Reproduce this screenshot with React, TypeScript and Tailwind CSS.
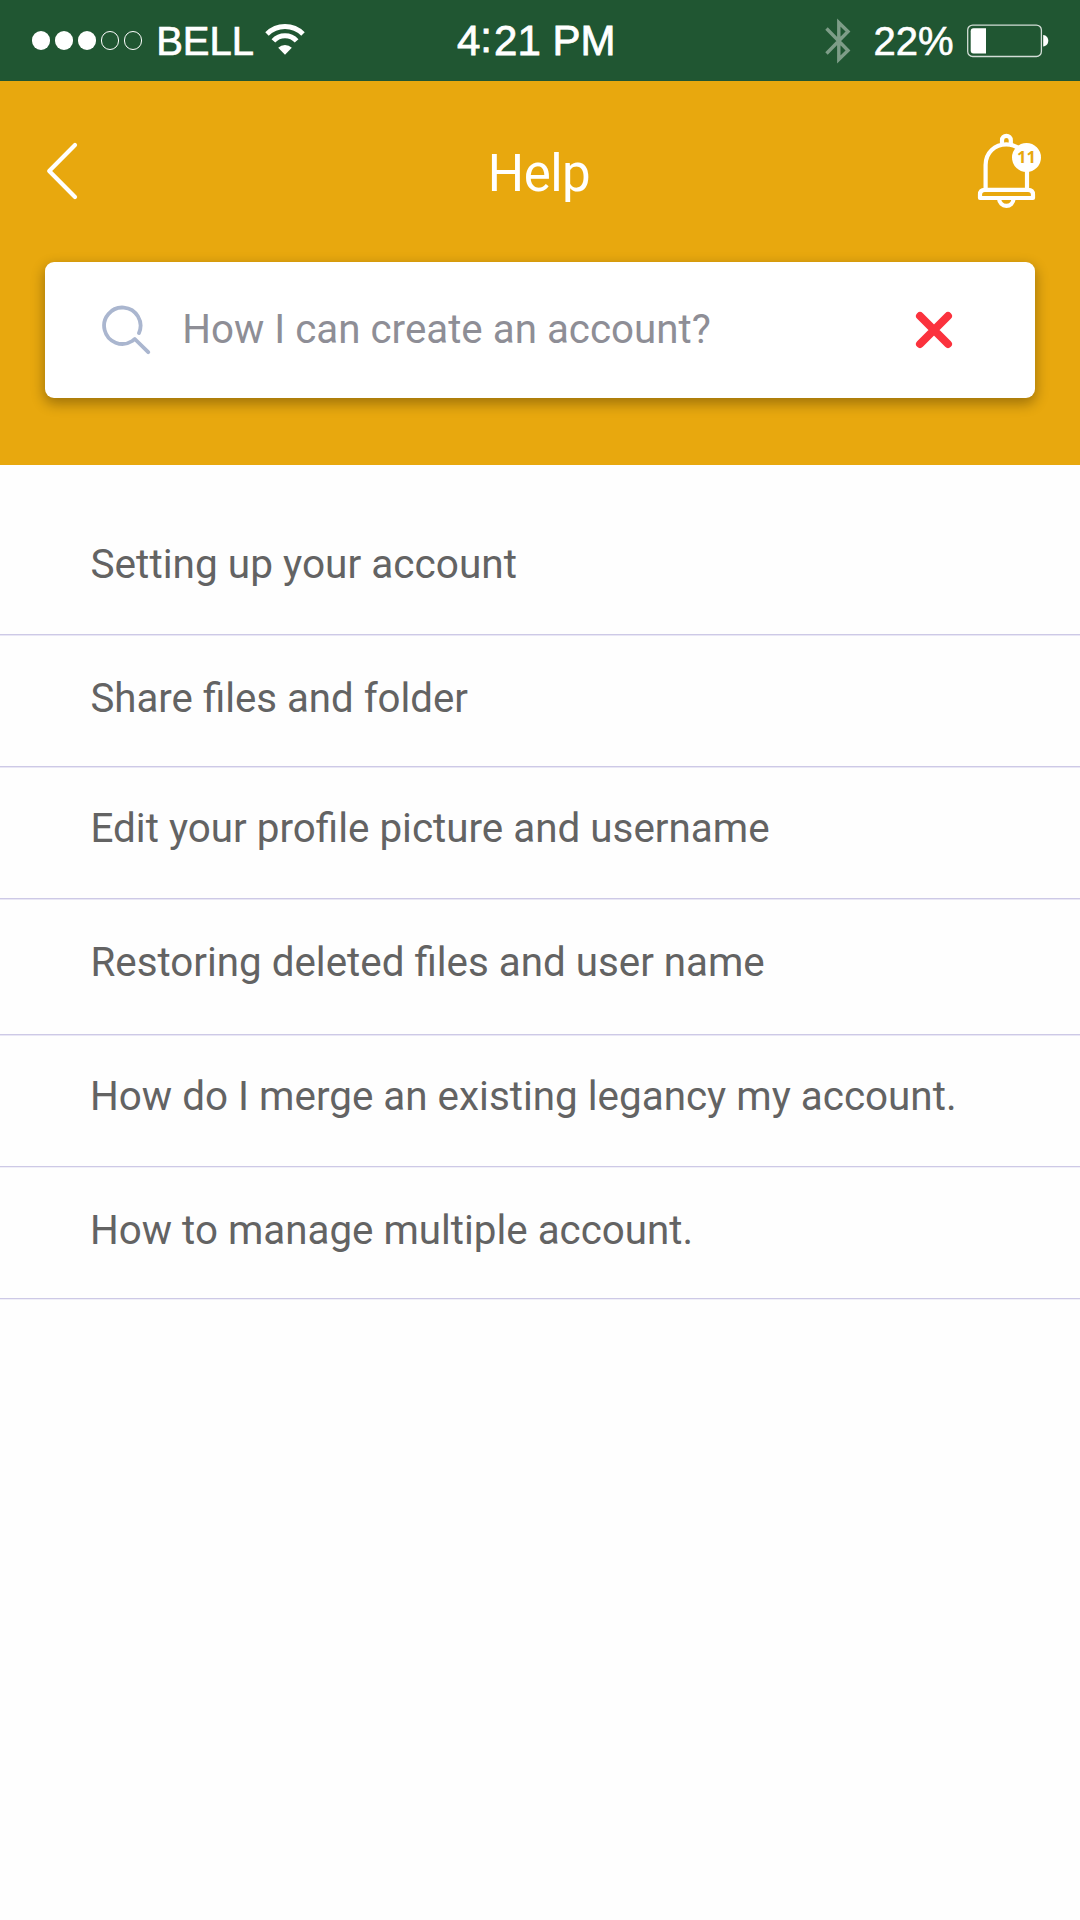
const topics = [
  { label: 'Setting up your account', row: 'h-[170px] pt-[79px] pl-[90.5px] text-[40.6px] shadow-[0_1px_0_#e9e7f5]' },
  { label: 'Share files and folder', row: 'h-[132px] pt-[44px] pl-[90.5px] text-[40.2px] shadow-[0_1px_0_#e9e7f5]' },
  { label: 'Edit your profile picture and username', row: 'h-[132px] pt-[42px] pl-[90.5px] text-[40.4px] shadow-[0_1px_0_#e9e7f5]' },
  { label: 'Restoring deleted files and user name', row: 'h-[136px] pt-[44px] pl-[90.5px] text-[40.35px] shadow-[0_1px_0_#e9e7f5]' },
  { label: 'How do I merge an existing legancy my account.', row: 'h-[132px] pt-[42px] pl-[90px] text-[40.4px] shadow-[0_1px_0_#f0eff8]' },
  { label: 'How to manage multiple account.', row: 'h-[132px] pt-[44px] pl-[90px] text-[40.35px] shadow-[0_1px_0_#f0eff8]' },
];

function SignalDots() {
  return (
    <div className="flex gap-[5px]">
      {[true, true, true, false, false].map((on, i) => (
        <span
          key={i}
          className={on ? 'size-[18.1px] rounded-full bg-white' : 'size-[18.1px] rounded-full border border-white'}
        />
      ))}
    </div>
  );
}

function WifiIcon() {
  return (
    <svg className="h-[32px] w-[40px]" viewBox="265 23 40 32" fill="none" stroke="#fff">
      <path d="M267 34A25.4 25.4 0 0 1 303 34" strokeWidth="4.9" />
      <path d="M273.4 40.9A15.6 15.6 0 0 1 296.6 40.9" strokeWidth="5" />
      <path d="M278.2 47.8A9.6 9.6 0 0 1 291.8 47.8L285 54.8Z" fill="#fff" stroke="none" />
    </svg>
  );
}

function BluetoothIcon() {
  return (
    <svg className="h-[46px] w-[26px] opacity-[0.42]" viewBox="825 17.5 26 46" fill="none" stroke="#fff" strokeWidth="3.4">
      <path d="M826.5 28L848 50L838.8 59V22L848 31L826.5 53" strokeMiterlimit="10" />
    </svg>
  );
}

function BatteryIcon() {
  return (
    <svg className="h-[34px] w-[82px]" viewBox="967 23.5 82 34">
      <rect x="967.7" y="24.6" width="73.7" height="31.4" rx="5" fill="none" stroke="#fff" strokeOpacity="0.8" strokeWidth="1.3" />
      <path d="M973.5 27.7H986V53H973.5Q970.7 53 970.7 50V30.7Q970.7 27.7 973.5 27.7Z" fill="#fff" />
      <path d="M1043.2 34.5C1046.5 34.8 1048.3 37.4 1048.3 40.2S1046.5 45.6 1043.2 46Z" fill="#fff" />
    </svg>
  );
}

function StatusBar() {
  return (
    <div className="flex h-[81px] items-center bg-[#205632] font-['Liberation_Sans',sans-serif] text-white">
      <div className="flex w-[457px] items-center pl-[31.7px]">
        <SignalDots />
        <span className="ml-[14px] text-[40px] leading-[40px] [-webkit-text-stroke:0.7px_white]">BELL</span>
        <span className="ml-[11px] -mt-[3px]"><WifiIcon /></span>
      </div>
      <div className="w-[368px] text-[42px] leading-[42px] whitespace-pre [-webkit-text-stroke:0.8px_white]">
        4<span className="relative -top-[3px] mr-[2px]">:</span>21 PM
      </div>
      <BluetoothIcon />
      <span className="ml-[22.5px] text-[40px] leading-[40px] [-webkit-text-stroke:0.6px_white]">22%</span>
      <span className="ml-[13.5px]"><BatteryIcon /></span>
    </div>
  );
}

function BackIcon() {
  return (
    <svg className="h-[58px] w-[34px]" viewBox="45 142 34 58" fill="none" stroke="#fff" strokeWidth="4.2" strokeLinecap="round" strokeLinejoin="round">
      <path d="M75 145L49.2 171L75 197" />
    </svg>
  );
}

function BellIcon() {
  return (
    <svg className="h-[76px] w-[60px]" viewBox="977 133 60 76" fill="none" stroke="#fff" strokeWidth="4.2">
      <path d="M1002 145V140.2A4.4 4.4 0 0 1 1010.8 140.2V145" />
      <path d="M985.6 189.5V165C985.6 152.5 995 144.4 1006.3 144.4S1027 152.5 1027 165V189.5" />
      <path d="M984.8 189.8H1028Q1033 189.8 1033 194.5V198H980V194.5Q980 189.8 984.8 189.8Z" strokeLinejoin="round" />
      <path d="M999 198.5C999.4 203 1002.4 205.9 1006.3 205.9S1013.2 203 1013.7 198.5" />
    </svg>
  );
}

function Header() {
  return (
    <header className="flex h-[384px] flex-col bg-[#e8a80e]">
      <div className="grid h-[181px] grid-cols-3 items-start px-[45px]">
        <button className="mt-[61px] justify-self-start"><BackIcon /></button>
        <h1 className="mt-[67px] mr-[2px] justify-self-center text-[51px] leading-[51px] tracking-[-0.5px] text-white">Help</h1>
        <button className="relative mt-[52px] -mr-[2px] justify-self-end">
          <BellIcon />
          <span className="absolute top-[10px] left-[35px] flex size-[29px] items-center justify-center rounded-full bg-white font-['Open_Sans',sans-serif] text-[16.5px] font-bold leading-none text-[#e8a80e]">
            11
          </span>
        </button>
      </div>
      <div className="mx-[45px] flex h-[136px] items-center rounded-[9px] bg-white shadow-[0_5px_13px_1px_rgba(0,0,0,0.31)]">
        <svg className="ml-[56px] h-[50px] w-[50px]" viewBox="101 305 50 50" fill="none" stroke="#aab6cf" strokeWidth="3.8" strokeLinecap="round" strokeLinejoin="round">
          <path d="M139 333A18.2 18.2 0 1 0 132.2 341L134.8 339L148.2 352.2" />
        </svg>
        <span className="ml-[31.3px] text-[40.3px] leading-[40px] text-[#8e8e96]">How I can create an account?</span>
        <svg className="mr-[81px] ml-auto h-[40px] w-[40px]" viewBox="914 310 40 40" fill="none" stroke="#fb323d" strokeWidth="8" strokeLinecap="round">
          <path d="M920 316L948 344M948 316L920 344" />
        </svg>
      </div>
    </header>
  );
}

export default function App() {
  return (
    <div className="flex h-[1920px] w-[1080px] flex-col overflow-hidden bg-[#fefefe] font-['Roboto',sans-serif]">
      <StatusBar />
      <Header />
      <ul className="flex flex-col">
        {topics.map(({ label, row }) => (
          <li key={label} className={`border-b border-[#cdc9e6] leading-[40px] whitespace-nowrap text-[#636363] ${row}`}>
            {label}
          </li>
        ))}
      </ul>
    </div>
  );
}
